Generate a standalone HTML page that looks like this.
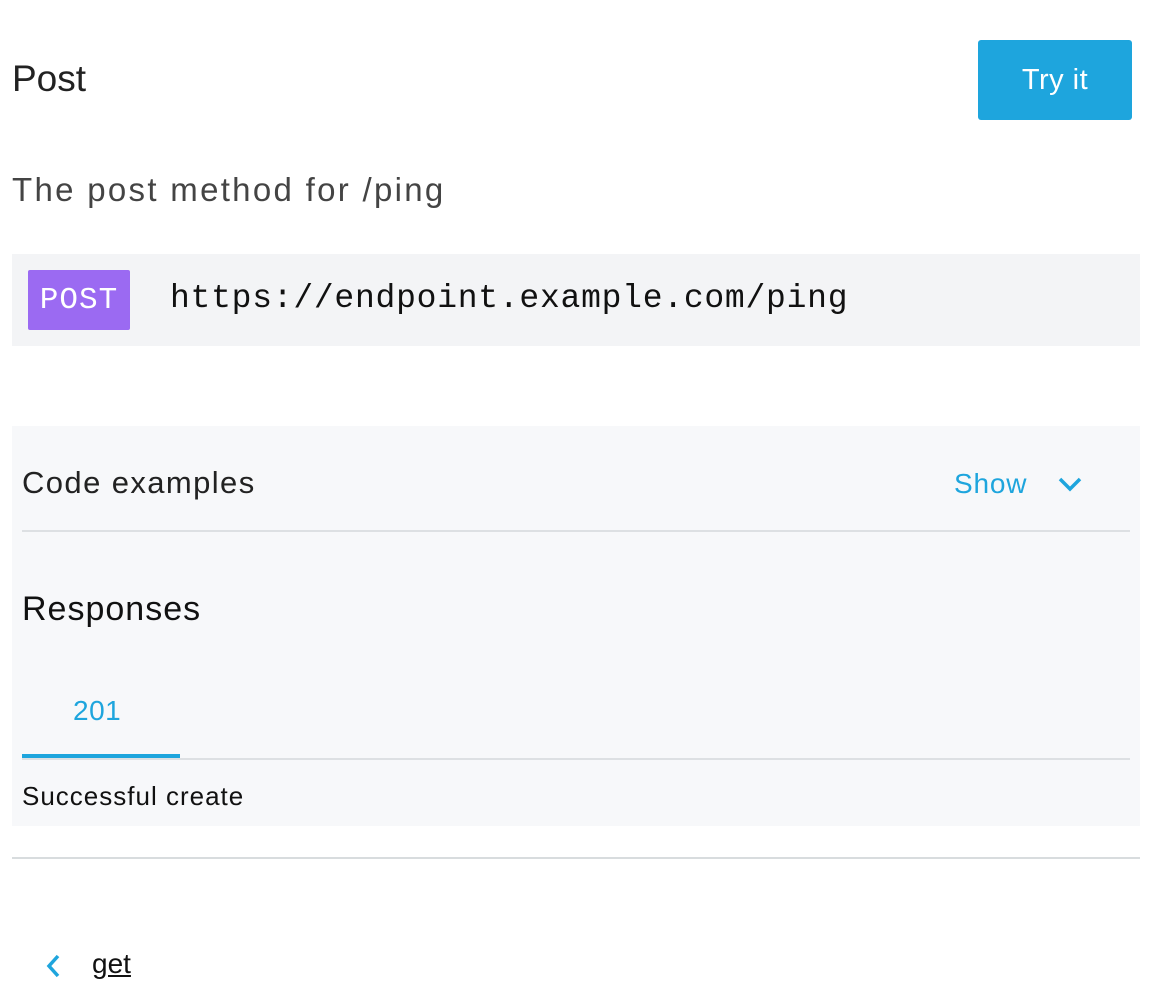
<!DOCTYPE html>
<html><head><meta charset="utf-8"><style>
body{margin:0;width:1158px;height:1000px;background:#fff;font-family:"Liberation Sans",sans-serif;position:relative;overflow:hidden}
.a{position:absolute}
</style></head><body>
<div class="a" style="left:12px;top:58px;font-size:37px;color:#222;font-weight:300">Post</div>
<div class="a" style="left:978px;top:40px;width:154px;height:80px;background:#1ea5dd;border-radius:3px;color:#fff;font-size:29px;line-height:80px;text-align:center;letter-spacing:0.5px">Try it</div>
<div class="a" style="left:12px;top:171px;font-size:33px;color:#444;letter-spacing:2.3px">The post method for /ping</div>
<div class="a" style="left:12px;top:254px;width:1128px;height:92px;background:#f3f4f6"></div>
<div class="a" style="left:28px;top:270px;width:102px;height:60px;background:#9b6af2;border-radius:2px;color:#fff;font-family:'Liberation Mono',monospace;font-size:31px;line-height:62px;text-align:center;letter-spacing:1px">POST</div>
<div class="a" style="left:170px;top:280px;font-family:'Liberation Mono',monospace;font-size:33px;color:#111;letter-spacing:0.75px">https://endpoint.example.com/ping</div>
<div class="a" style="left:12px;top:426px;width:1128px;height:400px;background:#f7f8fa"></div>
<div class="a" style="left:22px;top:465px;font-size:31px;color:#222;font-weight:300;letter-spacing:1.4px">Code examples</div>
<div class="a" style="left:954px;top:468px;font-size:28px;color:#1ea5dd;letter-spacing:0.8px">Show</div>
<svg class="a" style="left:1057px;top:475px" width="26" height="18" viewBox="0 0 26 18"><path d="M3 4l10 10 10-10" fill="none" stroke="#1ea5dd" stroke-width="3.5"/></svg>
<div class="a" style="left:22px;top:530px;width:1108px;height:2px;background:#dde0e3"></div>
<div class="a" style="left:22px;top:590px;font-size:34px;color:#111;letter-spacing:1px">Responses</div>
<div class="a" style="left:73px;top:695px;font-size:28px;color:#1ea5dd;letter-spacing:0.5px">201</div>
<div class="a" style="left:22px;top:758px;width:1108px;height:2px;background:#dde0e3"></div>
<div class="a" style="left:22px;top:754px;width:158px;height:4px;background:#1ea5dd"></div>
<div class="a" style="left:22px;top:781px;font-size:26px;color:#111;letter-spacing:1px">Successful create</div>
<div class="a" style="left:12px;top:857px;width:1128px;height:2px;background:#d8dcde"></div>
<svg class="a" style="left:44px;top:953px" width="18" height="26" viewBox="0 0 18 26"><path d="M14 3L5 13l9 10" fill="none" stroke="#1ea5dd" stroke-width="3.5"/></svg>
<div class="a" style="left:92px;top:948px;font-size:28px;color:#111;text-decoration:underline">get</div>
</body></html>
